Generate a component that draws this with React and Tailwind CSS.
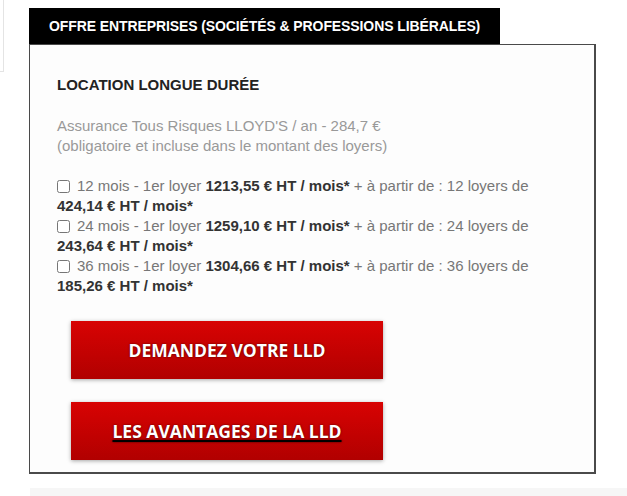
import React from "react";

const offers = [
  { months: 12, first: "1213,55", monthly: "424,14" },
  { months: 24, first: "1259,10", monthly: "243,64" },
  { months: 36, first: "1304,66", monthly: "185,26" },
];

const RedButton = ({ children, underline }) => (
  <button className="w-[312px] h-[58px] bg-gradient-to-b from-[#d80303] to-[#b10000] shadow-[0_1px_4px_rgba(0,0,0,0.35)] flex items-center justify-center">
    <span
      className={`text-white font-bold text-[17.5px] [text-shadow:0_0_2px_rgba(60,0,0,0.9)] ${
        underline ? "underline decoration-black decoration-2 underline-offset-2" : ""
      }`}
      style={{ fontFamily: '"Open Sans", "Liberation Sans", sans-serif' }}
    >
      {children}
    </span>
  </button>
);

const App = () => {
  return (
    <div
      className="relative w-[627px] h-[496px] bg-white overflow-hidden"
      style={{ fontFamily: '"Liberation Sans", Arial, sans-serif' }}
    >
      {/* faded edge of the previous block */}
      <div className="absolute left-0 top-0 w-[4px] h-[72px] border-r border-b border-[#e4e4e4]" />

      <div className="pt-[8px] pl-[29px]">
        {/* Tab */}
        <div className="w-[471px] h-[36px] bg-black flex items-center pl-[20px]">
          <span className="text-white font-bold text-[14px] tracking-[-0.1px]">
            OFFRE ENTREPRISES (SOCIÉTÉS &amp; PROFESSIONS LIBÉRALES)
          </span>
        </div>

        {/* Box */}
        <div className="w-[567px] h-[430px] bg-[#fdfdfd] border border-[#4a4a4a] border-b-2 border-r-2 pl-[27px] pt-[30px]">
          <h2 className="text-[15px] font-bold text-[#222] leading-[20px]">
            LOCATION LONGUE DURÉE
          </h2>

          <p className="mt-[21px] text-[15px] leading-[20px] text-[#999]">
            Assurance Tous Risques LLOYD'S / an - 284,7 €
            <br />
            (obligatoire et incluse dans le montant des loyers)
          </p>

          <div className="mt-[20px] text-[15px] leading-[20px] text-[#777] w-[495px]">
            {offers.map((o) => (
              <div key={o.months}>
                <input
                  type="checkbox"
                  className="w-[13px] h-[13px] align-[-2px] mr-[7px] accent-gray-400"
                />
                {o.months} mois - 1er loyer{" "}
                <b className="text-[#333]">{o.first} € HT / mois*</b> + à partir de : {o.months} loyers de{" "}
                <b className="text-[#333]">{o.monthly} € HT / mois*</b>
              </div>
            ))}
          </div>

          <div className="mt-[25px] ml-[14px] flex flex-col gap-[23px]">
            <RedButton>DEMANDEZ VOTRE LLD</RedButton>
            <RedButton underline>LES AVANTAGES DE LA LLD</RedButton>
          </div>
        </div>
      </div>

      {/* light strip at the bottom */}
      <div className="absolute left-[30px] right-0 top-[488px] bottom-0 bg-[#f6f6f6]" />
    </div>
  );
};

export default App;
